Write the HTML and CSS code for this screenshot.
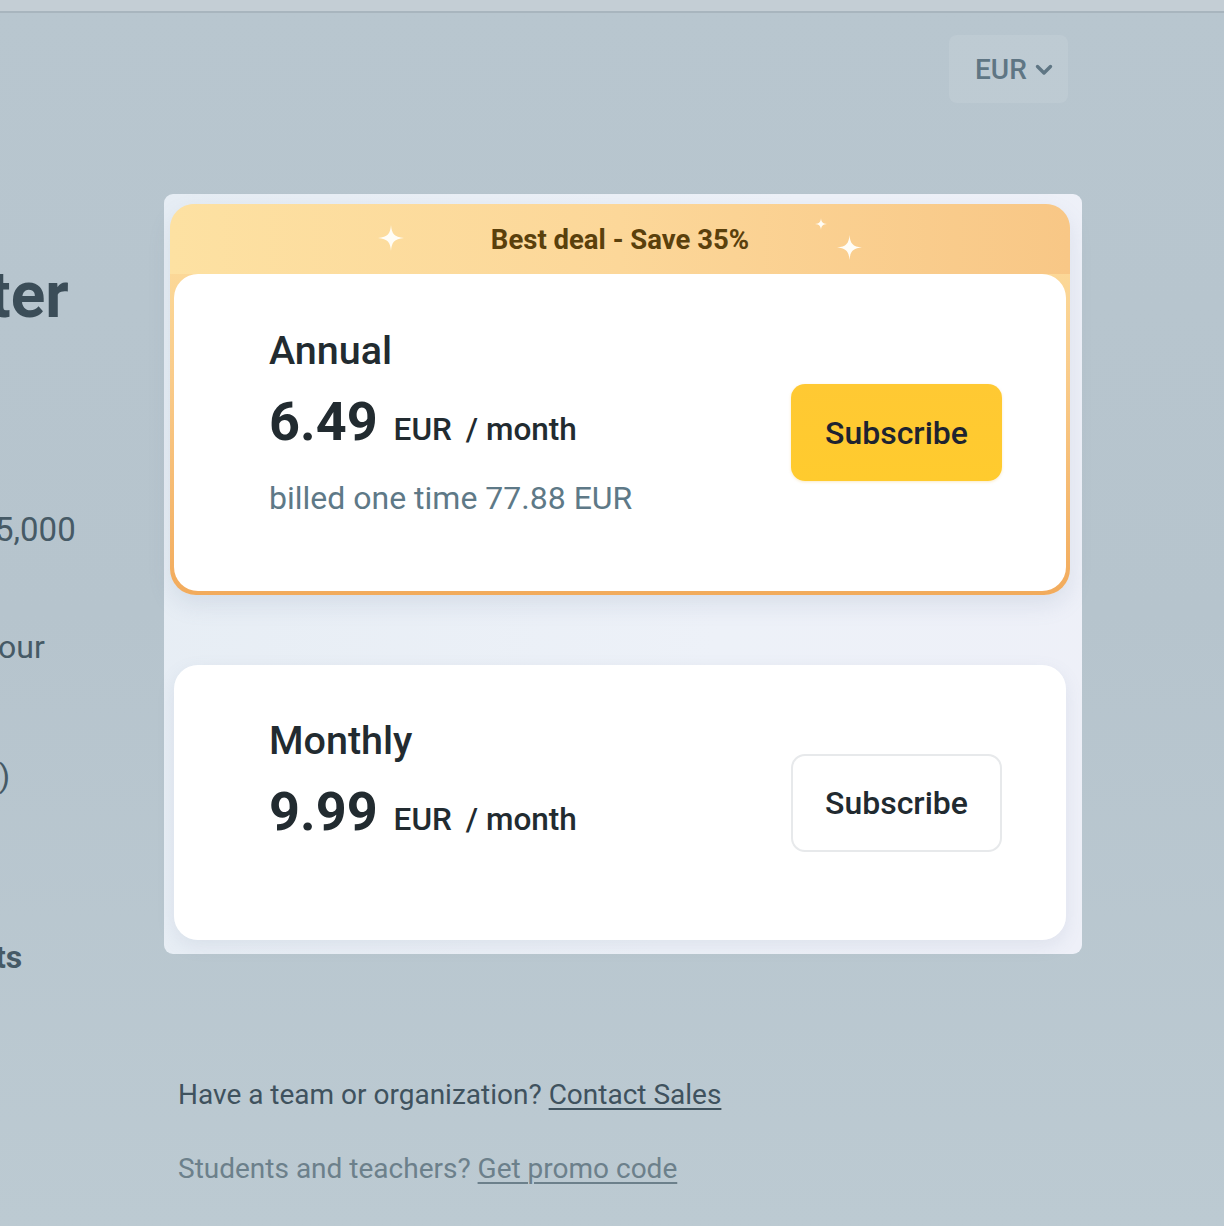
FILE: index.html
```html
<!DOCTYPE html>
<html lang="en">
<head>
<meta charset="utf-8">
<title>Pricing</title>
<link rel="stylesheet" href="styles.css">
</head>
<body>
<div class="topbar"></div>
<header class="header">
  <button class="currency" type="button">
    <span>EUR</span>
    <svg class="chev" width="18" height="12" viewBox="0 0 18 12"><path d="M2.5 2.5 L9 9 L15.5 2.5" fill="none" stroke="currentColor" stroke-width="3.4" stroke-linecap="round" stroke-linejoin="round"/></svg>
  </button>
</header>
<div class="layout">
  <aside class="left">
    <div class="frag frag-title">ter</div>
    <div class="frag frag-a">5,000</div>
    <div class="frag frag-b">our</div>
    <div class="frag frag-c">)</div>
    <div class="frag frag-d">ts</div>
  </aside>
  <main class="center">
    <section class="panel">
      <article class="plan plan-best">
        <div class="deal">
          <svg class="spark spark-1" viewBox="0 0 24 24"><path d="M12 0 C12.6 8 15 11.3 24 12 C15 12.7 12.6 16 12 24 C11.4 16 9 12.7 0 12 C9 11.3 11.4 8 12 0Z"/></svg>
          <span class="deal-text">Best deal - Save 35%</span>
          <svg class="spark spark-2" viewBox="0 0 24 24"><path d="M12 0 C12.6 8 15 11.3 24 12 C15 12.7 12.6 16 12 24 C11.4 16 9 12.7 0 12 C9 11.3 11.4 8 12 0Z"/></svg>
          <svg class="spark spark-3" viewBox="0 0 24 24"><path d="M12 0 C12.6 8 15 11.3 24 12 C15 12.7 12.6 16 12 24 C11.4 16 9 12.7 0 12 C9 11.3 11.4 8 12 0Z"/></svg>
        </div>
        <div class="plan-body">
          <div class="plan-info info-annual">
            <h2 class="plan-name">Annual</h2>
            <div class="price-row"><span class="price">6.49</span><span class="cur">EUR</span><span class="per">/ month</span></div>
            <div class="billed">billed one time 77.88 EUR</div>
          </div>
          <button class="btn btn-primary" type="button">Subscribe</button>
        </div>
      </article>
      <article class="plan plan-monthly">
        <div class="plan-body">
          <div class="plan-info info-monthly">
            <h2 class="plan-name">Monthly</h2>
            <div class="price-row"><span class="price">9.99</span><span class="cur">EUR</span><span class="per">/ month</span></div>
          </div>
          <button class="btn btn-outline" type="button">Subscribe</button>
        </div>
      </article>
    </section>
    <div class="footer">
      <p class="foot foot-1">Have a team or organization? <a href="#">Contact Sales</a></p>
      <p class="foot foot-2">Students and teachers? <a href="#">Get promo code</a></p>
    </div>
  </main>
</div>
</body>
</html>
```
FILE: styles.css
```css
* { box-sizing: border-box; }
html, body {
  margin: 0;
  padding: 0;
}
body {
  width: 1224px;
  height: 1226px;
  overflow: hidden;
  font-family: Roboto, "Noto Sans", "Liberation Sans", sans-serif;
  background: linear-gradient(to bottom, #b8c6cf 0%, #b6c4cd 50%, #bccad2 100%);
  color: #222b30;
}
.topbar {
  height: 13px;
  background: #c4ced5;
  border-bottom: 2px solid #a8b5be;
}
.header {
  display: flex;
  justify-content: flex-end;
  padding: 22px 156px 0 0;
  height: 181px;
}
.currency {
  display: flex;
  align-items: center;
  gap: 8px;
  width: 119px;
  height: 68px;
  padding: 0 0 0 26px;
  border: none;
  border-radius: 8px;
  background: rgba(255, 255, 255, 0.09);
  color: #5f7684;
  font-family: inherit;
  font-size: 28px;
  font-weight: 500;
}
.chev { margin-top: 2px; }

.layout {
  display: flex;
  align-items: flex-start;
}
.left {
  width: 164px;
  flex: none;
  color: #3f515c;
}
.frag { white-space: nowrap; }
.frag-title {
  margin: 70px 0 0 -11px;
  font-size: 64px;
  line-height: 64px;
  font-weight: 700;
  color: #3b4d58;
}
.frag-a { margin: 182px 0 0 -5px; font-size: 33px; line-height: 40px; color: #465a66; }
.frag-b { margin: 77px 0 0 -2px; font-size: 32px; line-height: 40px; color: #465a66; }
.frag-c { margin: 89px 0 0 -1px; font-size: 32px; line-height: 40px; color: #465a66; }
.frag-d { margin: 141px 0 0 -5px; font-size: 32px; line-height: 40px; font-weight: 700; color: #465a66; }

.center {
  width: 918px;
  flex: none;
}
.panel {
  display: flex;
  flex-direction: column;
  gap: 70px;
  padding: 10px 12px 14px 6px;
  border-radius: 9px;
  background: linear-gradient(100deg, #e6edf4 0%, #edf1f8 60%, #eef0f8 100%);
}
.plan-best {
  position: relative;
  padding: 0 4px 4px;
  border-radius: 26px;
  background: linear-gradient(to bottom, #fde0a0 0%, #f9cb8a 45%, #f2ab5c 100%);
  box-shadow: 0 10px 22px rgba(120, 135, 165, 0.16);
}
.deal {
  height: 70px;
  display: flex;
  align-items: center;
  justify-content: center;
  border-radius: 24px 24px 0 0;
  background: linear-gradient(to right, #fde1a2 0%, #fcd799 50%, #f8c786 100%);
  margin: 0 -4px;
}
.deal-text {
  font-size: 27.5px;
  font-weight: 700;
  color: #5a400c;
}
.spark {
  position: absolute;
  fill: #fffdf6;
}
.spark-1 { left: 208px; top: 19px; width: 26px; height: 30px; }
.spark-2 { left: 645px; top: 13px; width: 12px; height: 14px; }
.spark-3 { left: 667px; top: 29px; width: 25px; height: 29px; }

.plan-body {
  display: flex;
  align-items: center;
  justify-content: space-between;
  background: #fff;
  border-radius: 24px;
  padding: 0 64px 0 95px;
}
.plan-monthly {
  margin: 0 4px;
  border-radius: 24px;
  box-shadow: 0 6px 18px rgba(110, 125, 160, 0.12);
}
.info-annual { padding: 54px 0 73px; }
.info-monthly { padding: 53px 0 96px; }

.plan-name {
  margin: 0;
  font-size: 39.5px;
  line-height: 46px;
  font-weight: 500;
  color: #222b30;
}
.price-row {
  display: flex;
  align-items: baseline;
  margin-top: 16px;
  height: 64px;
  line-height: 64px;
  white-space: nowrap;
}
.price {
  font-size: 54px;
  font-weight: 700;
  color: #222b30;
}
.cur, .per {
  font-size: 31.5px;
  font-weight: 500;
  color: #222b30;
}
.cur { margin-left: 16px; }
.per { margin-left: 14px; }
.billed {
  margin-top: 24px;
  font-size: 32px;
  line-height: 40px;
  color: #5e7987;
}

.btn {
  width: 211px;
  height: 97px;
  border-radius: 14px;
  font-family: inherit;
  font-size: 32px;
  font-weight: 500;
  color: #1e2330;
  cursor: pointer;
}
.btn-primary {
  border: none;
  background: linear-gradient(to bottom, #ffc933 0%, #ffcb2e 100%);
  box-shadow: 0 1px 3px rgba(230, 170, 40, 0.25);
}
.btn-outline {
  height: 98px;
  background: #fff;
  border: 2px solid #e7e9eb;
  color: #212a30;
}

.footer {
  padding: 123px 0 0 14px;
}
.foot {
  margin: 0;
  font-size: 28px;
  line-height: 36px;
}
.foot a { color: inherit; text-decoration: underline; text-underline-offset: 4px; text-decoration-thickness: 2px; }
.foot-1 { color: #3f525e; }
.foot-2 { margin-top: 38px; color: #6c808b; }
```
